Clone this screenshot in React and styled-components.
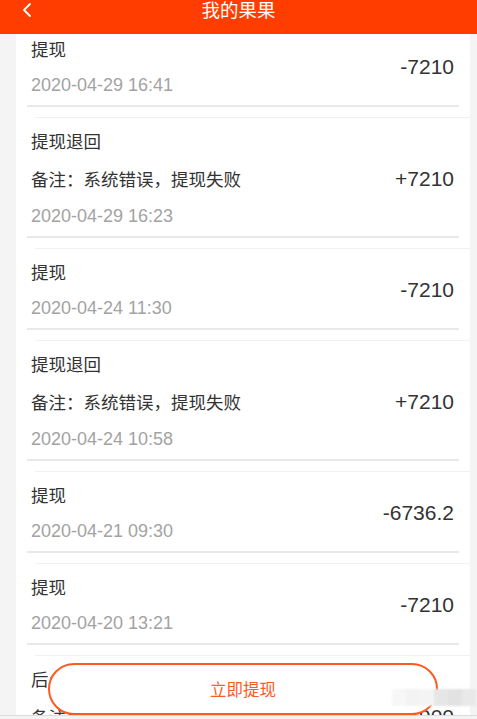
import React from "react";
import styled, { createGlobalStyle } from "styled-components";

const Global = createGlobalStyle`
  html, body { margin: 0; padding: 0; background: #f4f4f4; }
  body { font-family: "Liberation Sans", "Noto Sans CJK SC", sans-serif; }
  * { box-sizing: border-box; }
`;

const Page = styled.div`
  position: relative;
  width: 477px;
  height: 719px;
  display: flex;
  flex-direction: column;
  overflow: hidden;
  background: #f4f4f4;
`;

const Header = styled.header`
  height: 34px;
  flex: none;
  background: #ff3d00;
  display: grid;
  grid-template-columns: 1fr auto 1fr;
  align-items: start;
  position: relative;
  z-index: 2;
`;

const Back = styled.div`
  padding: 3px 0 0 22px;
  line-height: 0;
`;

const HeaderTitle = styled.h1`
  margin: 0;
  font-size: 18.5px;
  line-height: 19px;
  font-weight: 400;
  color: #fff;
  font-family: "Noto Sans CJK SC", sans-serif;
`;

const Scroller = styled.main`
  flex: 1;
  overflow: hidden;
`;

const Card = styled.div`
  margin: -9px 7px 0 16px;
  background: #fff;
  min-height: 100%;
`;

const TopRule = styled.div`
  height: 1px;
  margin-left: 19px;
  background: #f1f1f1;
`;

const Body = styled.div`
  display: flex;
  align-items: center;
  padding: 5px 16px 0 15px;
`;

const Info = styled.div`
  flex: 1;
  display: flex;
  flex-direction: column;
`;

const Title = styled.div`
  height: 36px;
  line-height: 36px;
  font-size: 17.5px;
  color: #333;
  font-family: "Noto Sans CJK SC", sans-serif;
`;

const Remark = styled.div`
  height: 39px;
  line-height: 39px;
  font-size: 17.5px;
  color: #333;
  font-family: "Noto Sans CJK SC", sans-serif;
`;

const DateText = styled.div`
  height: 36px;
  line-height: 36px;
  font-size: 18px;
  color: #a3a3a3;
`;

const Amount = styled.div`
  font-size: 21px;
  color: #333;
`;

const BottomRule = styled.div`
  height: 2px;
  margin: 2px 11px 10px;
  background: #e9e9e9;
`;

const Footer = styled.footer`
  height: 4px;
  flex: none;
  border-top: 1px solid #dcdcdc;
  background: #f3f3f3;
`;

const ActionButton = styled.button`
  position: absolute;
  left: 48px;
  bottom: 4px;
  width: 390px;
  height: 52px;
  border: 2px solid #ff5a1f;
  border-radius: 26px;
  background: #fff;
  color: #ff5a1f;
  font-size: 16.5px;
  font-family: "Noto Sans CJK SC", sans-serif;
  padding: 0;
  cursor: pointer;
  z-index: 3;
`;

const Mosaic = styled.div`
  position: absolute;
  left: 392px;
  top: 689px;
  display: flex;
  z-index: 4;
  filter: blur(1px);
`;

const Tile = styled.div`
  width: 14px;
  height: 17px;
  background: ${(p) => p.$c};
`;

const records = [
  { title: "提现", date: "2020-04-29 16:41", amount: "-7210" },
  { title: "提现退回", remark: "备注：系统错误，提现失败", date: "2020-04-29 16:23", amount: "+7210" },
  { title: "提现", date: "2020-04-24 11:30", amount: "-7210" },
  { title: "提现退回", remark: "备注：系统错误，提现失败", date: "2020-04-24 10:58", amount: "+7210" },
  { title: "提现", date: "2020-04-21 09:30", amount: "-6736.2" },
  { title: "提现", date: "2020-04-20 13:21", amount: "-7210" },
  { title: "后台充值", remark: "备注：系统补发", date: "2020-04-19 10:12", amount: "+7900" },
];

function Record({ title, remark, date, amount }) {
  return (
    <div>
      <TopRule />
      <Body>
        <Info>
          <Title>{title}</Title>
          {remark && <Remark>{remark}</Remark>}
          <DateText>{date}</DateText>
        </Info>
        <Amount>{amount}</Amount>
      </Body>
      <BottomRule />
    </div>
  );
}

export default function App() {
  return (
    <>
      <Global />
      <Page>
        <Header>
          <Back>
            <svg width="10" height="14" viewBox="0 0 10 14" fill="none">
              <path d="M8 1L2 7l6 6" stroke="#fff" strokeWidth="1.8" strokeLinecap="round" strokeLinejoin="round" />
            </svg>
          </Back>
          <HeaderTitle>我的果果</HeaderTitle>
          <div />
        </Header>
        <Scroller>
          <Card>
            {records.map((r, i) => (
              <Record key={i} {...r} />
            ))}
          </Card>
        </Scroller>
        <Footer />
        <ActionButton>立即提现</ActionButton>
        <Mosaic>
          {["#f7f7f7", "#f3f3f3", "#f4f4f4", "#e6e6e6", "#e2e2e2", "#e9e9e9", "#f3f3f3"].map((c, i) => (
            <Tile key={i} $c={c} />
          ))}
        </Mosaic>
      </Page>
    </>
  );
}
